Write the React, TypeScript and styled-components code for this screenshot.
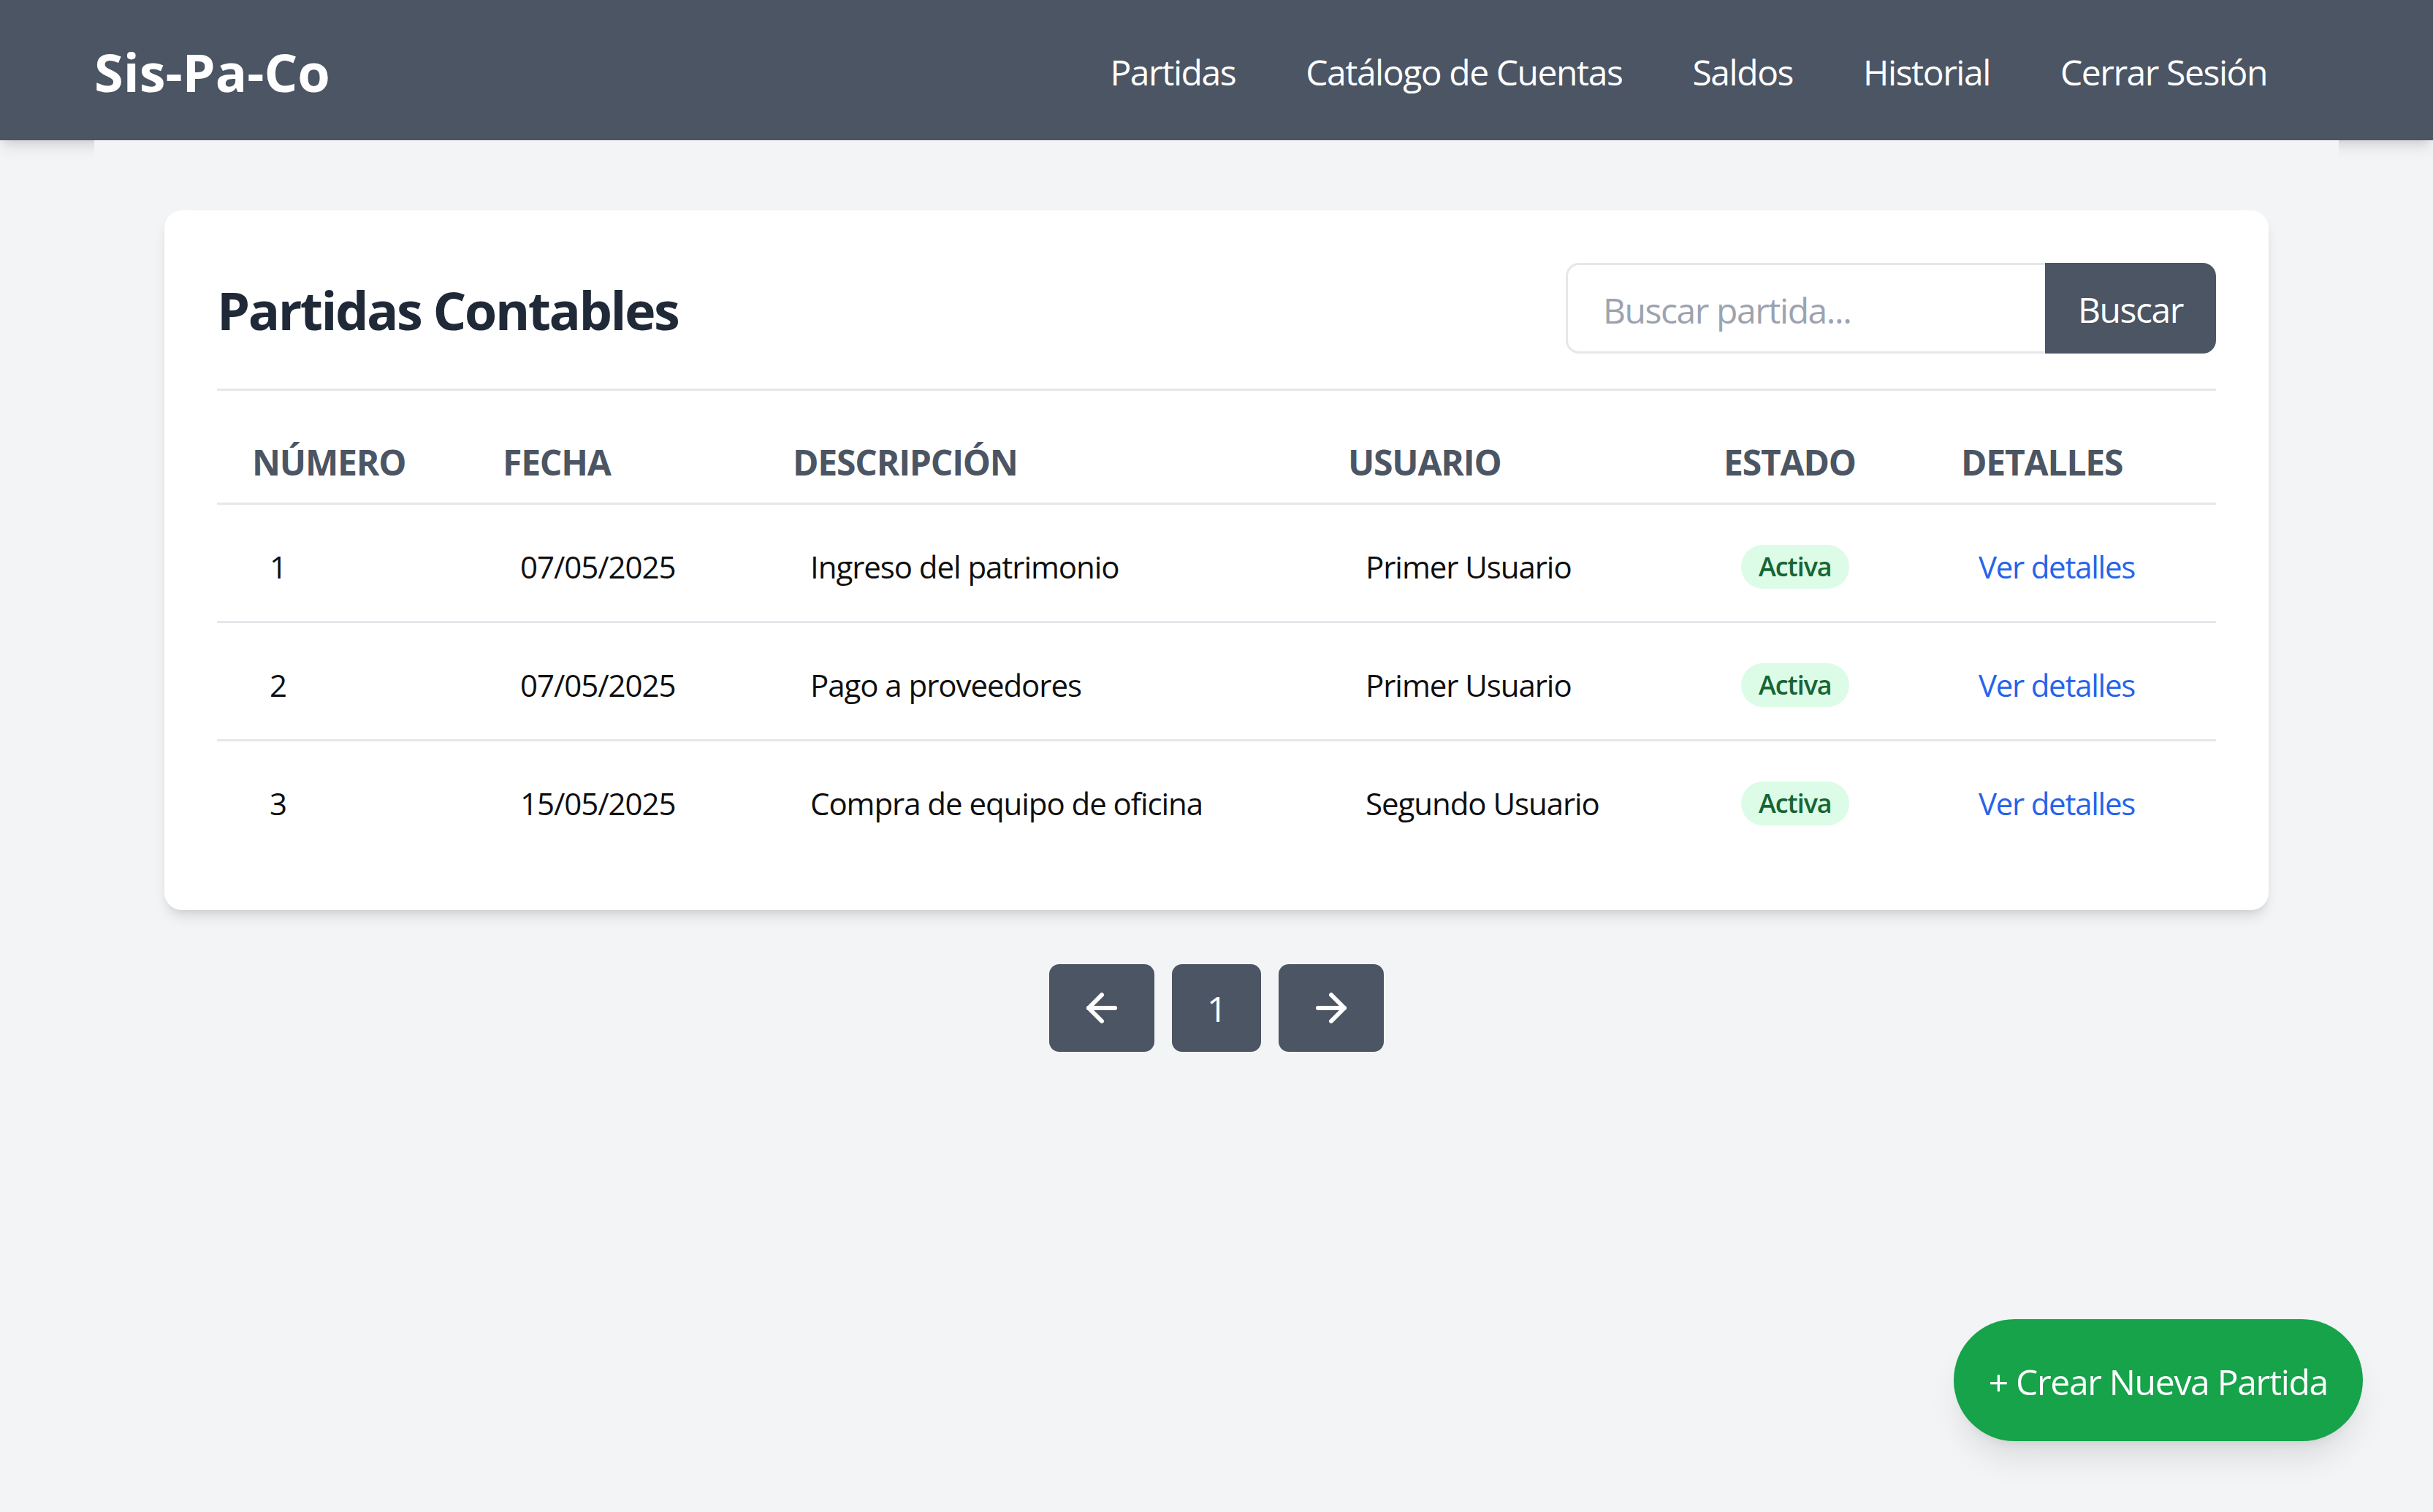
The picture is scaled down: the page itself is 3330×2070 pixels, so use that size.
import React from "react";
import styled, { createGlobalStyle } from "styled-components";

const GlobalStyle = createGlobalStyle`
  * { box-sizing: border-box; letter-spacing: -0.03em; }
  html, body { margin: 0; padding: 0; }
  body {
    background: #f3f4f6;
    font-family: "Open Sans", "Noto Sans", sans-serif;
    color: #111827;
  }
`;

const NavBar = styled.header`
  background: #4b5563;
  box-shadow: 0 12px 18px -3px rgba(0, 0, 0, 0.1), 0 6px 12px -6px rgba(0, 0, 0, 0.1);
`;

const NavInner = styled.div`
  max-width: 3072px;
  height: 192px;
  margin: 0 auto;
  padding-right: 98px;
  display: flex;
  align-items: center;
  justify-content: space-between;
`;

const Logo = styled.a`
  font-size: 72px;
  line-height: 96px;
  font-weight: 700;
  letter-spacing: 0;
  color: #ffffff;
  text-decoration: none;
  padding-top: 4px;
`;

const NavLinks = styled.nav`
  display: flex;
  align-items: center;
  gap: 96px;
  padding-top: 5px;
`;

const NavLink = styled.a`
  font-size: 48px;
  line-height: 72px;
  color: #ffffff;
  text-decoration: none;
`;

const Main = styled.main`
  max-width: 3072px;
  margin: 0 auto;
  padding: 96px;
  background: #f3f4f6;
`;

const Card = styled.section`
  background: #ffffff;
  border-radius: 24px;
  padding: 72px;
  box-shadow: 0 12px 18px -3px rgba(0, 0, 0, 0.1), 0 6px 12px -6px rgba(0, 0, 0, 0.1);
`;

const CardHeader = styled.div`
  display: flex;
  align-items: center;
  justify-content: space-between;
  padding-bottom: 48px;
  border-bottom: 3px solid #e5e7eb;
  margin-bottom: 36px;
`;

const Title = styled.h1`
  margin: 0;
  padding-top: 3px;
  font-size: 72px;
  line-height: 96px;
  font-weight: 700;
  letter-spacing: -0.035em;
  color: #1f2937;
`;

const SearchForm = styled.form`
  display: flex;
  margin: 0;
`;

const SearchInput = styled.input`
  width: 656px;
  height: 124px;
  padding: 4px 48px 0;
  border: 3px solid #e5e7eb;
  border-right: none;
  border-radius: 18px 0 0 18px;
  font-family: inherit;
  font-size: 48px;
  color: #111827;
  outline: none;
  background: #ffffff;
  &::placeholder {
    color: #9ca3af;
  }
`;

const SearchButton = styled.button`
  width: 234px;
  height: 124px;
  padding-top: 4px;
  border: none;
  border-radius: 0 18px 18px 0;
  background: #4b5563;
  color: #ffffff;
  font-family: inherit;
  font-size: 48px;
  cursor: pointer;
`;

const Table = styled.table`
  width: 100%;
  border-collapse: collapse;
  table-layout: fixed;
`;

const Col = styled.col<{ $w: number }>`
  width: ${(p) => p.$w}px;
`;

const Th = styled.th`
  text-align: left;
  padding: 26px 48px 19px;
  font-size: 48px;
  line-height: 72px;
  font-weight: 700;
  letter-spacing: -0.025em;
  color: #4b5563;
  text-transform: uppercase;
  white-space: nowrap;
  border-bottom: 3px solid #e5e7eb;
`;

const Tr = styled.tr`
  &:not(:last-child) td {
    border-bottom: 3px solid #e5e7eb;
  }
`;

const Td = styled.td`
  padding: 55px 72px 44px;
  font-size: 42px;
  line-height: 60px;
  letter-spacing: -0.025em;
  color: #0f0f10;
  white-space: nowrap;
`;

const Badge = styled.span`
  display: inline-flex;
  align-items: center;
  height: 60px;
  padding: 0 24px;
  border-radius: 9999px;
  background: #dcfce7;
  color: #166534;
  font-size: 36px;
  font-weight: 600;
  vertical-align: top;
`;

const DetailLink = styled.a`
  color: #2563eb;
  text-decoration: none;
`;

const Pagination = styled.div`
  display: flex;
  justify-content: center;
  gap: 24px;
  margin-top: 74px;
`;

const PageButton = styled.button`
  height: 120px;
  padding: 0 48px;
  border: none;
  border-radius: 14px;
  background: #4b5563;
  color: #ffffff;
  font-family: inherit;
  font-size: 48px;
  display: flex;
  align-items: center;
  justify-content: center;
  cursor: pointer;
`;

const Fab = styled.button`
  position: fixed;
  right: 96px;
  bottom: 97px;
  height: 167px;
  padding: 4px 48px 0;
  border: none;
  border-radius: 9999px;
  background: #16a34a;
  color: #ffffff;
  font-family: inherit;
  font-size: 48px;
  letter-spacing: -0.027em;
  box-shadow: 0 30px 45px -9px rgba(0, 0, 0, 0.1), 0 12px 18px -12px rgba(0, 0, 0, 0.1);
  cursor: pointer;
`;

const Arrow = ({ dir }: { dir: "left" | "right" }) => (
  <svg width="48" height="48" viewBox="0 0 48 48" fill="none" stroke="currentColor"
    strokeWidth="6" strokeLinecap="round" strokeLinejoin="round"
    style={dir === "right" ? { transform: "scaleX(-1)" } : undefined}>
    <path d="M24 6 L6 24 L24 42" />
    <path d="M6 24 H42" />
  </svg>
);

const rows = [
  { n: 1, fecha: "07/05/2025", desc: "Ingreso del patrimonio", user: "Primer Usuario" },
  { n: 2, fecha: "07/05/2025", desc: "Pago a proveedores", user: "Primer Usuario" },
  { n: 3, fecha: "15/05/2025", desc: "Compra de equipo de oficina", user: "Segundo Usuario" },
];

const cols = [343, 397, 760, 514, 325, 397];
const headers = ["Número", "Fecha", "Descripción", "Usuario", "Estado", "Detalles"];

export default function App() {
  return (
    <>
      <GlobalStyle />
      <NavBar>
        <NavInner>
          <Logo href="#">Sis-Pa-Co</Logo>
          <NavLinks>
            <NavLink href="#">Partidas</NavLink>
            <NavLink href="#">Catálogo de Cuentas</NavLink>
            <NavLink href="#">Saldos</NavLink>
            <NavLink href="#">Historial</NavLink>
            <NavLink href="#">Cerrar Sesión</NavLink>
          </NavLinks>
        </NavInner>
      </NavBar>
      <Main>
        <Card>
          <CardHeader>
            <Title>Partidas Contables</Title>
            <SearchForm onSubmit={(e) => e.preventDefault()}>
              <SearchInput placeholder="Buscar partida..." />
              <SearchButton type="submit">Buscar</SearchButton>
            </SearchForm>
          </CardHeader>
          <Table>
            <colgroup>
              {cols.map((w, i) => (
                <Col key={i} $w={w} />
              ))}
            </colgroup>
            <thead>
              <tr>
                {headers.map((h) => (
                  <Th key={h}>{h}</Th>
                ))}
              </tr>
            </thead>
            <tbody>
              {rows.map((r) => (
                <Tr key={r.n}>
                  <Td>{r.n}</Td>
                  <Td>{r.fecha}</Td>
                  <Td>{r.desc}</Td>
                  <Td>{r.user}</Td>
                  <Td>
                    <Badge>Activa</Badge>
                  </Td>
                  <Td>
                    <DetailLink href="#">Ver detalles</DetailLink>
                  </Td>
                </Tr>
              ))}
            </tbody>
          </Table>
        </Card>
        <Pagination>
          <PageButton aria-label="Anterior">
            <Arrow dir="left" />
          </PageButton>
          <PageButton>1</PageButton>
          <PageButton aria-label="Siguiente">
            <Arrow dir="right" />
          </PageButton>
        </Pagination>
      </Main>
      <Fab>+ Crear Nueva Partida</Fab>
    </>
  );
}
